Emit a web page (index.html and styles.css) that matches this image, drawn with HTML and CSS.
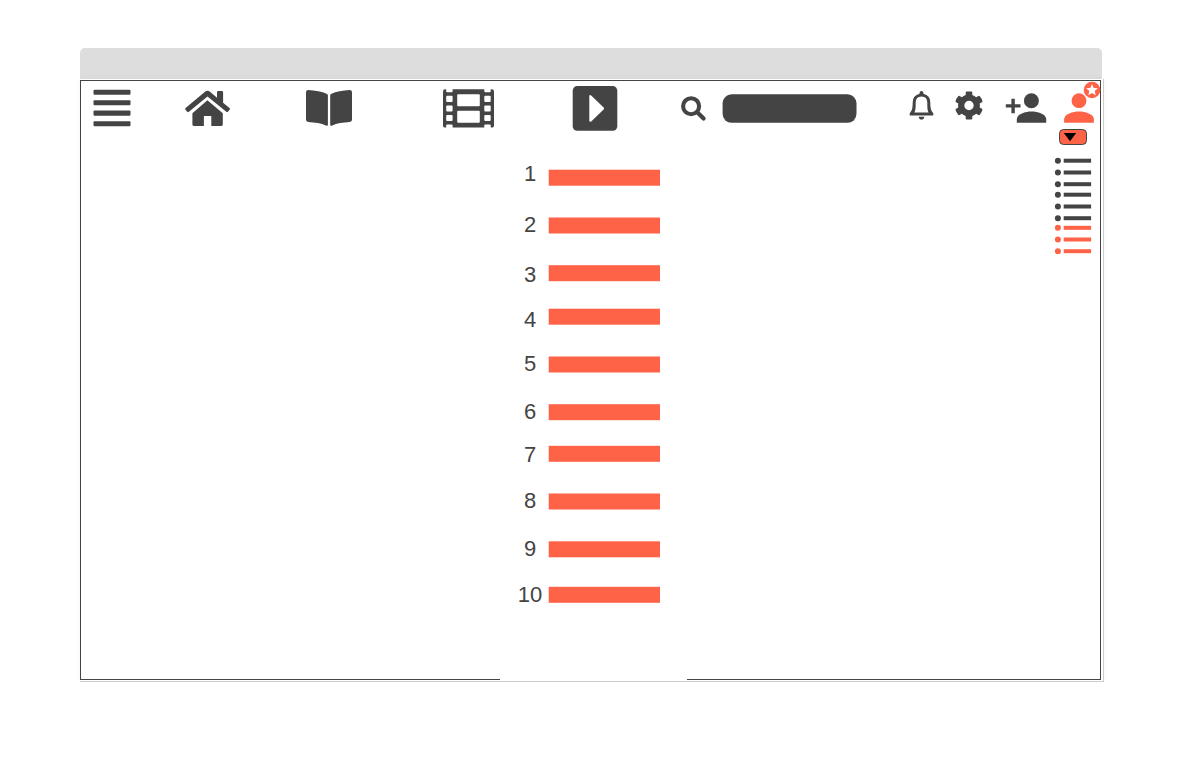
FILE: index.html
```html
<!DOCTYPE html>
<html lang="en">
<head>
<meta charset="utf-8">
<title>Top 10</title>
<link rel="stylesheet" href="styles.css">
</head>
<body>
<div class="window">
  <div class="titlebar"></div>
  <div class="frame">
    <div class="page">
      <header class="toolbar">
        <svg class="icon menu" viewBox="93 89 38 38"><g><rect x="93.5" y="89.7" width="37" height="5.1" rx="1"/><rect x="93.5" y="100.2" width="37" height="5.1" rx="1"/><rect x="93.5" y="110.6" width="37" height="5.1" rx="1"/><rect x="93.5" y="121.2" width="37" height="5.1" rx="1"/></g></svg>
        <svg class="icon home" viewBox="185 90 46 37"><path d="M207.4 100.2 L222.8 113.2 V124.6 Q222.8 126 221.4 126 H211.3 V116 H203.9 V126 H193.8 Q192.4 126 192.4 124.6 V113.2 Z"/><path d="M205 91.8 Q207.5 89.8 210 91.8 L217 97.7 V92.2 Q217 91.1 218.1 91.1 H222 Q223.1 91.1 223.1 92.2 V102.8 L229.5 108.1 Q230.4 109 229.6 109.8 L227.9 111.7 Q227.1 112.5 226.3 111.8 L207.5 96.4 L188.9 111.8 Q188 112.5 187.2 111.7 L185.5 109.8 Q184.8 108.9 185.6 108.1 Z"/></svg>
        <svg class="icon book" viewBox="305 89 48 38"><path d="M308.3 90 C315 90.3 322 91.5 327 94 Q327.9 94.5 327.9 95.4 V124.8 Q327.9 126.3 326.4 125.7 C321 123.2 315 122.4 308.2 122 Q306 121.9 306 119.8 V92.2 Q306 90 308.3 90 Z M349.7 90 C343 90.3 336 91.5 331 94 Q330.2 94.5 330.2 95.4 V124.8 Q330.2 126.3 331.7 125.7 C337 123.2 343 122.4 349.8 122 Q352 121.9 352 119.8 V92.2 Q352 90 349.7 90 Z"/></svg>
        <svg class="icon film" viewBox="443 89 51 39"><path d="M445.2 89.2 H491.8 Q494 89.2 494 91.4 V125.4 Q494 127.6 491.8 127.6 H445.2 Q443 127.6 443 125.4 V91.4 Q443 89.2 445.2 89.2 Z"/><g class="hole"><rect x="457.2" y="94.2" width="22.6" height="12" rx="1"/><rect x="457.2" y="110.8" width="22.6" height="12" rx="1"/><rect x="446.2" y="95.8" width="6.4" height="6.1" rx="1"/><rect x="446.2" y="105.4" width="6.4" height="6.1" rx="1"/><rect x="446.2" y="115" width="6.4" height="6.1" rx="1"/><rect x="484.3" y="95.8" width="6.4" height="6.1" rx="1"/><rect x="484.3" y="105.4" width="6.4" height="6.1" rx="1"/><rect x="484.3" y="115" width="6.4" height="6.1" rx="1"/><rect x="446.2" y="88" width="6.4" height="4.3" rx="1"/><rect x="484.3" y="88" width="6.4" height="4.3" rx="1"/><rect x="446.2" y="124.6" width="6.4" height="5" rx="1"/><rect x="484.3" y="124.6" width="6.4" height="5" rx="1"/></g></svg>
        <svg class="icon play" viewBox="572 86 46 45"><rect x="572.7" y="86.1" width="44.6" height="44.6" rx="4.5"/><path class="hole" d="M589.3 96.2 Q589.3 94.2 591.2 95.4 L603.6 107.6 Q604.4 108.5 603.6 109.4 L591.2 121.4 Q589.3 122.6 589.3 120.6 Z"/></svg>
        <svg class="icon search" viewBox="681 96 26 26"><g class="stroke"><circle cx="691.1" cy="106.2" r="8" stroke-width="4.1"/><path d="M698 113 L703.6 118.6" stroke-width="4.2"/></g></svg>
        <svg class="icon field" viewBox="722 94 135 29"><rect x="722.6" y="94.3" width="133.9" height="28.5" rx="9"/></svg>
        <svg class="icon bell" viewBox="909 91 26 30"><path fill-rule="evenodd" d="M921.5 91 Q923.4 91 923.4 92.8 V93.8 Q930.3 95.5 930.3 102.3 C930.3 108.5 931 110.8 933.3 113.2 V115.4 H909.7 V113.2 C912 110.8 912.7 108.5 912.7 102.3 Q912.7 95.5 919.6 93.8 V92.8 Q919.6 91 921.5 91 Z M921.5 96.5 Q915.7 96.5 915.7 102.5 C915.7 108.3 915.5 110.3 914.4 112.6 H928.6 C927.5 110.3 927.3 108.3 927.3 102.5 Q927.3 96.5 921.5 96.5 Z"/><path d="M918.7 116.7 H924.3 Q924.2 119.5 921.5 119.5 Q918.8 119.5 918.7 116.7 Z"/></svg>
        <svg class="icon gear" viewBox="955 91 28 29"><path fill-rule="evenodd" d="M966.7 91.6 H971.3 Q972.2 91.6 972.3 92.5 V95.1 Q974.6 95.9 976.1 97.3 L978.4 96 Q979.2 95.6 979.8 96.3 Q981.7 98.5 982.4 101 Q982.6 101.8 981.9 102.2 L979.7 103.4 Q980.1 105.5 979.7 107.6 L981.9 108.8 Q982.6 109.2 982.4 110 Q981.7 112.5 979.8 114.7 Q979.2 115.4 978.4 115 L976.1 113.7 Q974.6 115.1 972.3 115.9 V118.5 Q972.2 119.4 971.3 119.5 H966.7 Q965.8 119.4 965.7 118.5 V115.9 Q963.4 115.1 961.9 113.7 L959.6 115 Q958.8 115.4 958.2 114.7 Q956.3 112.5 955.6 110 Q955.4 109.2 956.1 108.8 L958.3 107.6 Q957.9 105.5 958.3 103.4 L956.1 102.2 Q955.4 101.8 955.6 101 Q956.3 98.5 958.2 96.3 Q958.8 95.6 959.6 96 L961.9 97.3 Q963.4 95.9 965.7 95.1 V92.5 Q965.8 91.6 966.7 91.6 Z M969 100.8 A4.7 4.7 0 1 0 969 110.2 A4.7 4.7 0 1 0 969 100.8 Z"/></svg>
        <svg class="icon add" viewBox="1005 93 42 30"><circle cx="1031.4" cy="100.7" r="7.5"/><path d="M1016.8 122.8 V119.4 C1016.8 114 1025.5 111.6 1031.5 111.6 S1046.2 114 1046.2 119.4 V122.8 Z"/><path d="M1011.4 98.7 H1014.8 V104.3 H1020.5 V107.6 H1014.8 V113.3 H1011.4 V107.6 H1005.8 V104.3 H1011.4 Z"/></svg>
        <div class="account">
          <svg class="icon user" viewBox="1064 81 37 42"><circle cx="1079" cy="100.7" r="7.4"/><path d="M1064.1 122.8 V119.4 C1064.1 114 1073 111.6 1079 111.6 S1093.9 114 1093.9 119.4 V122.8 Z"/><circle cx="1092" cy="90" r="8.3"/><path class="hole" d="M1092 83.9 L1093.7 87.9 L1097.9 88.2 L1094.7 91 L1095.7 95.2 L1092 93 L1088.3 95.2 L1089.3 91 L1086.1 88.2 L1090.3 87.9 Z"/></svg>
          <svg class="icon dropdown" viewBox="1058 128 30 18"><rect x="1059.5" y="129.5" width="27" height="15" rx="4"/><path d="M1063.8 133 H1076.2 L1070 141.2 Z"/></svg>
          <svg class="icon lists" viewBox="1054 157 38 98">
            <defs><g id="row"><circle cx="1057.9" cy="0" r="3"/><rect x="1063.7" y="-2" width="27.4" height="4"/></g></defs>
            <g><use href="#row" y="160.7"/><use href="#row" y="172.5"/><use href="#row" y="184.2"/><use href="#row" y="194.7"/><use href="#row" y="206.5"/><use href="#row" y="218.2"/></g>
            <g class="accent"><use href="#row" y="227.8"/><use href="#row" y="239.5"/><use href="#row" y="251.2"/></g>
          </svg>
        </div>
      </header>
      <main class="ranking">
        <div class="ranks">
          <span>1</span><span class="g25">2</span><span class="g24">3</span><span class="g19">4</span><span class="g18">5</span><span class="g22">6</span><span class="g17">7</span><span class="g20">8</span><span class="g22">9</span><span class="g20">10</span>
        </div>
        <svg class="bars" viewBox="548 161 113 447">
          <rect x="548.7" y="169.7" width="111.3" height="16"/><rect x="548.7" y="217.5" width="111.3" height="16"/><rect x="548.7" y="265.2" width="111.3" height="16"/><rect x="548.7" y="308.7" width="111.3" height="16"/><rect x="548.7" y="356.5" width="111.3" height="16"/><rect x="548.7" y="404.2" width="111.3" height="16"/><rect x="548.7" y="445.8" width="111.3" height="16"/><rect x="548.7" y="493.5" width="111.3" height="16"/><rect x="548.7" y="541.3" width="111.3" height="16"/><rect x="548.7" y="586.8" width="111.3" height="16"/>
        </svg>
      </main>
      <div class="edge"><i class="edge-left"></i><i class="edge-right"></i></div>
    </div>
  </div>
</div>
</body>
</html>
```
FILE: styles.css
```css
* { box-sizing: border-box; }
body {
  margin: 0;
  padding: 48px 0 0 80px;
  background: #fff;
  font-family: "Liberation Sans", Arial, sans-serif;
}
.window { width: 1024px; }
.titlebar {
  width: 1022px;
  height: 31px;
  background: #ddd;
  border-radius: 5px 5px 0 0;
}
.frame {
  width: 1024px;
  height: 603px;
  padding-top: 1px;
  border-right: 1px solid #ccc;
  border-bottom: 1px solid #ccc;
  box-shadow: 0 0 7px rgba(0, 0, 0, .04);
}
.page {
  display: flex;
  flex-direction: column;
  width: 1021px;
  height: 600px;
  border: 1px solid #444;
  border-bottom: 0;
  background: #fff;
}
.toolbar {
  display: flex;
  align-items: flex-start;
  height: 80px;
}
.icon {
  display: block;
  flex: none;
  fill: #444;
}
.hole { fill: #fff; }
.accent { fill: #ff6347; }
.stroke { fill: none; stroke: #444; stroke-linecap: round; }
.menu { width: 38px; height: 38px; margin: 8px 0 0 12px; }
.home { width: 46px; height: 37px; margin: 9px 0 0 54px; }
.book { width: 48px; height: 38px; margin: 8px 0 0 74px; }
.film { width: 51px; height: 39px; margin: 8px 0 0 90px; }
.play { width: 46px; height: 45px; margin: 5px 0 0 78px; }
.search { width: 26px; height: 26px; margin: 15px 0 0 63px; }
.field { width: 135px; height: 29px; margin: 13px 0 0 15px; }
.bell { width: 26px; height: 30px; margin: 10px 0 0 52px; }
.gear { width: 28px; height: 29px; margin: 10px 0 0 20px; }
.add { width: 42px; height: 30px; margin: 12px 0 0 22px; }
.account { margin-left: 7px; }
.user { width: 37px; height: 42px; margin-left: 10px; fill: #ff6347; }
.dropdown { width: 30px; height: 18px; margin: 5px 0 0 4px; }
.dropdown rect { fill: #ff6347; stroke: #444; }
.dropdown path { fill: #000; }
.lists { width: 38px; height: 98px; margin-top: 11px; }
.ranking {
  display: flex;
  flex: 1;
  padding-left: 434px;
}
.ranks {
  display: flex;
  flex-direction: column;
  width: 30px;
  color: #444;
  font-size: 22px;
  line-height: 26px;
  text-align: center;
}
.g17 { margin-top: 17px; }
.g18 { margin-top: 18px; }
.g19 { margin-top: 19px; }
.g20 { margin-top: 20px; }
.g22 { margin-top: 22px; }
.g24 { margin-top: 24px; }
.g25 { margin-top: 25px; }
.bars {
  width: 113px;
  height: 447px;
  margin-left: 3px;
  fill: #ff6347;
}
.edge {
  display: flex;
  justify-content: space-between;
  height: 1px;
}
.edge i { height: 1px; background: #444; }
.edge-left { width: 419px; }
.edge-right { width: 413px; }
```
